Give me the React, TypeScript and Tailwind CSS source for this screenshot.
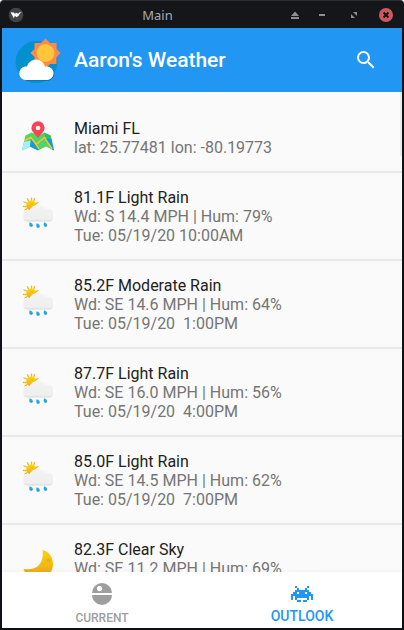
import React from "react";

type Report = { icon: React.ReactNode; title: string; wind: string; time?: string };

function KivyLogo() {
  return (
    <svg viewBox="0 0 16 16" className="size-4 shrink-0" aria-hidden="true">
      <circle cx="8" cy="8" r="7.3" fill="#434343" />
      <path d="M2.6 5.2 6 5.4l1 1.6.9-1.3 2.3 1 .9-1.3 2.6-.1-2 1.5-1.2 2.2-2.1 1.3L7 8.8l-1.2 2.4Z" fill="#fff" />
    </svg>
  );
}

function AppLogo() {
  return (
    <svg viewBox="0 0 46 46" className="h-[46px] w-[46px] shrink-0" aria-hidden="true">
      <circle cx="21.5" cy="25" r="21" fill="#0290cf" />
      <path d="M30.500 1.500 35 6h6.500v6l4 4-4 4v7H35l-4.500 4.500-4.500-4.500h-6.500v-7l-4-4 4-4V6H26Z" fill="#ff8a47" />
      <circle cx="30.500" cy="16" r="9" fill="#ffc53d" />
      <path d="M11 43.500h21a7 7 0 0 0 7-6" fill="none" stroke="#0778b8" strokeWidth="1" />
      <path d="M10.500 43a6.800 6.800 0 0 1-.5-13.500h2a9.300 9.300 0 0 1 18 0h2.500a6.800 6.800 0 0 1 0 13.500Z" fill="#fff" />
    </svg>
  );
}

function MapIcon() {
  return (
    <svg viewBox="0 0 32 32" className="size-8" aria-hidden="true">
      <path d="m3.500 15.500 6-3 6.500 3 6.500-3 6 3 3.500 15-8-4-8 4-8-4-8 4Z" fill="#4fd466" />
      <path d="m1.800 22 7-1.500-.8 6-8 4Z" fill="#a6effa" />
      <path d="m9 18.500 8 8.500-1 3.500-8-4Z" fill="#129be0" />
      <path d="m23.500 18 6 .5 2.500 12-3.500-2Z" fill="#129be0" />
      <path d="m22.500 13 6 2.500.6 2.500-6-1Z" fill="#2abf5e" />
      <path d="m2.500 20.500 6.500-3 8 11M14 24.500l8.500-7 7.500 11.500" fill="none" stroke="#ffc22e" strokeWidth="1.500" />
      <path d="M16 18.300C14.500 14.500 9.400 12.500 9.400 7.900a6.600 6.600 0 0 1 13.200 0c0 4.600-5.100 6.600-6.600 10.400Z" fill="#fb4353" />
      <circle cx="16" cy="8" r="2.300" fill="#fff" />
    </svg>
  );
}

function RainIcon() {
  return (
    <svg viewBox="0 0 32 32" className="size-8" aria-hidden="true">
      <defs>
        <linearGradient id="sun" x1="0" y1="0" x2="0" y2="1">
          <stop offset="0" stopColor="#fbd500" />
          <stop offset="1" stopColor="#e9a927" />
        </linearGradient>
        <linearGradient id="cloud" x1="0" y1="0" x2="0" y2="1">
          <stop offset="0" stopColor="#f3f3f3" />
          <stop offset=".85" stopColor="#efefef" />
          <stop offset="1" stopColor="#dcdcdc" />
        </linearGradient>
      </defs>
      <path d="M9.500 1.200v2M5.500 1.800l1 2M12.500 1.500 12 3.500M2 5l2.500 1M1.500 9.500H4M16 5.500l-2.500 1.300M3 13l2-1.500" stroke="#eeb51d" strokeWidth="1.300" strokeLinecap="round" />
      <circle cx="9.300" cy="8.500" r="5" fill="url(#sun)" />
      <path d="M5 24.500a3.700 3.700 0 0 1-3.700-3.700v-4A3.800 3.800 0 0 1 5 13h2.500C9 9.800 12 7.900 15.800 7.900c3.200 0 6 1.500 7.700 3.800h3.300a4.200 4.200 0 0 1 4.200 4.200v4.900a3.700 3.700 0 0 1-3.700 3.700Z" fill="url(#cloud)" />
      <path d="M7.600 25.300c3 1 3.500 2.300 3.200 3.500-.4 1.500-3.200 1.500-3.500-.3-.2-1 .1-2 .3-3.200Zm7 1c3 1 3.500 2.300 3.200 3.500-.4 1.500-3.200 1.500-3.500-.3-.2-1 .1-2 .3-3.200Zm7.400-1c3 1 3.500 2.300 3.200 3.500-.4 1.500-3.200 1.500-3.500-.3-.2-1 .1-2 .3-3.200Z" fill="#2ba7e1" />
    </svg>
  );
}

function MoonIcon() {
  return (
    <svg viewBox="0 0 32 32" className="size-8" aria-hidden="true">
      <defs>
        <linearGradient id="moon" x1="0" y1="0" x2="0" y2="1">
          <stop offset="0" stopColor="#fbd508" />
          <stop offset="1" stopColor="#e99e24" />
        </linearGradient>
      </defs>
      <path d="M20.500 1c6 1.500 10.500 6.500 10.500 14 0 9-6.500 15.500-15 15.500-6.500 0-12-3.500-14.500-10.500C15 22 22.500 14 20.500 1Z" fill="url(#moon)" />
      <circle cx="26.500" cy="11.500" r="2" fill="#e9b010" />
    </svg>
  );
}

function BallIcon() {
  return (
    <svg viewBox="0 0 24 24" className="size-6" aria-hidden="true">
      <path fillRule="evenodd" d="M2 11a10 10 0 0 1 20 0ZM9.500 4a2.600 2.600 0 1 0 0 5.200A2.600 2.600 0 0 0 9.500 4Z" fill="#9e9e9e" />
      <path d="M2 13a10 10 0 0 0 20 0Z" fill="#9e9e9e" />
    </svg>
  );
}

function InvaderIcon() {
  return (
    <svg viewBox="0 0 24 24" className="size-6" shapeRendering="crispEdges" aria-hidden="true">
      <path
        fill="#2196f3"
        fillRule="evenodd"
        d="M5 4h2v2H5ZM17 4h2v2h-2ZM7 6h2v2H7ZM15 6h2v2h-2ZM5 8h14v2h2v2h2v6h-2v-4h-2v4H5v-4H3v4H1v-6h2v-2h2ZM7 10v2h2v-2ZM15 10v2h2v-2ZM7 16v2h10v-2ZM7 18h4v2H7ZM13 18h4v2h-4Z"
      />
    </svg>
  );
}

const forecast: Report[] = [
  { icon: <RainIcon />, title: "81.1F Light Rain", wind: "Wd: S 14.4 MPH | Hum: 79%", time: "Tue: 05/19/20 10:00AM" },
  { icon: <RainIcon />, title: "85.2F Moderate Rain", wind: "Wd: SE 14.6 MPH | Hum: 64%", time: "Tue: 05/19/20  1:00PM" },
  { icon: <RainIcon />, title: "87.7F Light Rain", wind: "Wd: SE 16.0 MPH | Hum: 56%", time: "Tue: 05/19/20  4:00PM" },
  { icon: <RainIcon />, title: "85.0F Light Rain", wind: "Wd: SE 14.5 MPH | Hum: 62%", time: "Tue: 05/19/20  7:00PM" },
  { icon: <MoonIcon />, title: "82.3F Clear Sky", wind: "Wd: SE 11.2 MPH | Hum: 69%" },
];

function TitleBar() {
  return (
    <div className="flex h-7 shrink-0 items-center rounded-t-sm border-t border-[#2c2d33] bg-[#15161a] pr-2.5 pl-2">
      <KivyLogo />
      <h1 className="flex-1 pl-1 text-center font-['Noto_Sans',sans-serif] text-[13px] leading-5 text-[#a3abb8]">Main</h1>
      <div className="flex items-center gap-4">
        <div className="flex items-center gap-[11px]">
          <button aria-label="Shade" className="flex size-4 items-center justify-center">
            <svg viewBox="0 0 8 8" className="size-2">
              <path d="M4 .5 8 5H0ZM0 6h8v2H0Z" fill="#8d8f92" />
            </svg>
          </button>
          <button aria-label="Minimize" className="flex size-4 items-center justify-center">
            <span className="h-0.5 w-1.5 bg-[#8d8f92]" />
          </button>
        </div>
        <button aria-label="Maximize" className="flex size-4 items-center justify-center">
          <svg viewBox="0 0 6 6" className="size-1.5">
            <path d="M2 0h4v4ZM0 2v4h4Z" fill="#8d8f92" />
          </svg>
        </button>
        <button aria-label="Close" className="flex size-4 items-center justify-center">
          <svg viewBox="0 0 14 14" className="size-3.5">
            <circle cx="7" cy="7" r="7" fill="#cf5860" />
            <path d="m4.500 4.500 5 5m0-5-5 5" stroke="#15161a" strokeWidth="2" />
          </svg>
        </button>
      </div>
    </div>
  );
}

export default function App() {
  return (
    <div className="flex h-screen flex-col bg-white font-['Roboto',sans-serif]">
      <TitleBar />
      <div className="flex min-h-0 flex-1 flex-col border-x-2 border-b-2 border-[#101116] bg-[#fafafa]">
        <header className="flex h-16 shrink-0 items-center bg-[#2196f3] pr-6 pl-[13px] text-white">
          <AppLogo />
          <h2 className="flex-1 pl-[13px] text-[21px] leading-7 font-medium">Aaron's Weather</h2>
          <button aria-label="Search">
            <svg viewBox="0 0 24 24" className="size-6" fill="currentColor">
              <path d="M15.500 14h-.79l-.28-.27A6.470 6.470 0 0 0 16 9.500 6.500 6.500 0 1 0 9.500 16c1.610 0 3.090-.59 4.230-1.570l.27.28v.79l5 4.990L20.490 19l-4.990-5zm-6 0C7.010 14 5 11.990 5 9.500S7.010 5 9.500 5 14 7.010 14 9.500 11.990 14 9.500 14z" />
            </svg>
          </button>
        </header>
        <main className="relative min-h-0 flex-1">
          <ul className="h-full overflow-y-auto pt-3 text-base leading-[19px] text-[#757575] [scrollbar-width:none]">
            <li className="flex gap-5 border-b-2 border-[#e9e9e9] pt-[15px] pb-3.5 pl-5">
              <div className="h-8 pt-px">
                <MapIcon />
              </div>
              <div>
                <h3 className="text-[#212121]">Miami FL</h3>
                <p>lat: 25.77481 lon: -80.19773</p>
              </div>
            </li>
            {forecast.map((r) => (
              <li key={r.title} className="flex gap-5 border-b-2 border-[#e9e9e9] pt-[15px] pb-3.5 pl-5">
                <div className="pt-[9px]">{r.icon}</div>
                <div className="whitespace-pre">
                  <h3 className="text-[#212121]">{r.title}</h3>
                  <p>{r.wind}</p>
                  {r.time && <p>{r.time}</p>}
                </div>
              </li>
            ))}
          </ul>
          <div className="absolute top-0 right-0 h-16 w-0.5 bg-[#ececec]" />
        </main>
        <nav className="relative flex h-14 shrink-0 bg-white shadow-[0_-1px_4px_rgba(0,0,0,0.04)]">
          <button className="flex flex-1 flex-col items-center pt-2.5 text-xs font-medium text-[#9e9e9e]">
            <BallIcon />
            <span className="pt-1 leading-4">CURRENT</span>
          </button>
          <button className="flex flex-1 flex-col items-center pt-2.5 text-sm font-medium text-[#2196f3]">
            <InvaderIcon />
            <span className="pt-0.5 leading-4">OUTLOOK</span>
          </button>
        </nav>
      </div>
    </div>
  );
}
